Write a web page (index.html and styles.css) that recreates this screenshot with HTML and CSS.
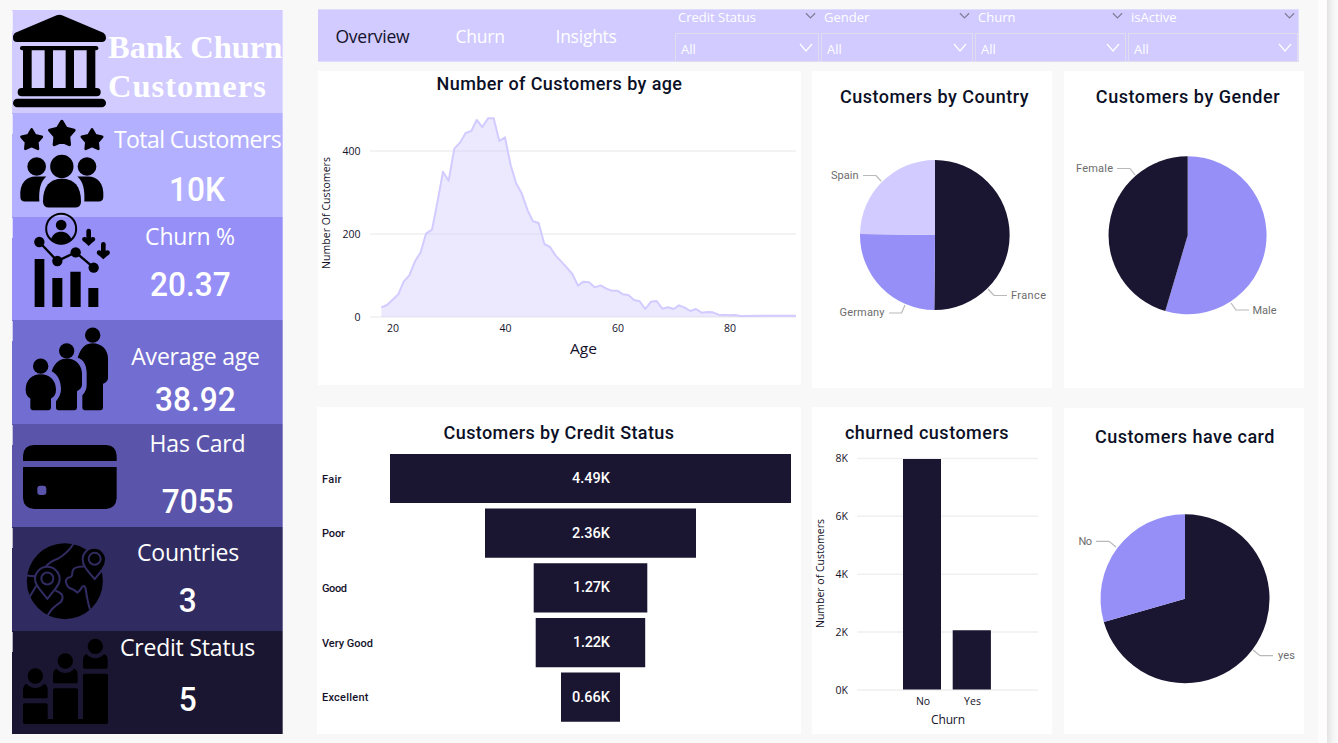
FILE: index.html
```html
<!DOCTYPE html>
<html lang="en">
<head>
<meta charset="utf-8">
<title>Bank Churn Customers</title>
<link rel="stylesheet" href="styles.css">
</head>
<body>
<div class="page">
<aside class="sidebar">
  <section class="tile tile-brand">
    <svg class="icon" viewBox="36 30 300 310.5"><path d="M170 46Q178 42 186 46L310 98Q318 103 318 114Q317 126 305 126H51Q39 126 39 114Q38 103 46 98Z"/><rect x="60" y="138" width="235" height="13" rx="6"/><path d="M69 145h26v125h-26zM134 145h25v125h-25zM197 145h25v125h-25zM260 145h26v125h-26z"/><rect x="53" y="264" width="249" height="25" rx="12"/><rect x="39" y="296" width="279" height="26" rx="13"/></svg>
    <h1 class="brand">Bank Churn<br><span class="brand-second">Customers</span></h1>
  </section>
  <section class="tile tile-total">
    <svg class="icon" viewBox="36 340.5 300 310.5">
      <defs><path id="star" stroke="#000" stroke-width="9" stroke-linejoin="round" d="M0-36L11.8-16.2L34.2-11.1L19 6.2L21.2 29.1L0 20L-21.2 29.1L-19 6.2L-34.2-11.1L-11.8-16.2Z"/></defs>
      <use href="#star" transform="translate(185.500 404) scale(1.07)"/><use href="#star" transform="translate(95 422) scale(.89)"/><use href="#star" transform="translate(276 422) scale(.89)"/>
      <circle cx="185.500" cy="501" r="35"/><circle cx="110" cy="501" r="28"/><circle cx="261" cy="501" r="28"/>
      <path d="M129 606C129 560 150 538 186 538S243 560 243 606Q243 624 225 624H147Q129 624 129 606Z"/>
      <path d="M61 592C58 550 80 531 106 531H139C122 545 116 570 118 606H75Q61 606 61 592Z"/><path d="M310 592C313 550 291 531 265 531H232C249 545 255 570 253 606H296Q310 606 310 592Z"/></svg>
    <div class="kpi"><span class="label">Total Customers</span><span class="value">10K</span></div>
  </section>
  <section class="tile tile-churn">
    <svg class="icon" viewBox="36 36 300 310.5"><circle cx="183.500" cy="71" r="45" fill="none" stroke="#000" stroke-width="6"/><circle cx="183.500" cy="60" r="16"/><path d="M152 106C156 87 170 80 183 80S211 87 215 106Q200 118 183 118T152 106Z"/><path d="M118 111L172 168L227 142L281 188" fill="none" stroke="#000" stroke-width="7"/><circle cx="118" cy="111" r="15.500"/><circle cx="172" cy="168" r="15.500"/><circle cx="227" cy="142" r="15.500"/><circle cx="281" cy="188" r="15.500"/><path d="M104 162h29v144h-29zM157 219h30v87h-30zM211 200h31v106h-31zM265 249h30v57h-30z"/>
      <g id="drop"><path d="M266 78V106" stroke="#000" stroke-width="14" stroke-linecap="round"/><path d="M246 103Q247 95 255 96L266 101L277 96Q285 95 286 103Q285 109 278 112L266 123L254 112Q247 109 246 103Z"/></g><use href="#drop" x="44" y="40"/></svg>
    <div class="kpi"><span class="label">Churn %</span><span class="value">20.37</span></div>
  </section>
  <section class="tile tile-age">
    <svg class="icon" viewBox="36 346.500 300 310.5"><circle cx="278" cy="392" r="23"/><circle cx="200" cy="439" r="23"/><circle cx="122" cy="485" r="23"/><path d="M77 556C77 525 97 509 122 509S168 525 168 556Q168 575 153 582V610Q153 617 146 617H98Q91 617 91 610V582Q77 575 77 556Z"/><path d="M155 500C165 470 185 462 203 462C230 463 246 485 246 508V540Q246 552 231 560V610Q231 617 224 617H176Q168 617 168 610V590Q183 575 183 553C182 525 172 510 155 500Z"/><path d="M233 460C243 425 260 416 278 416C305 416 324 435 324 462V520Q324 532 309 538V610Q309 617 302 617H254Q247 617 247 610V572Q260 560 260 540V508C260 480 250 465 233 460Z"/></svg>
    <div class="kpi"><span class="label">Average age</span><span class="value">38.92</span></div>
  </section>
  <section class="tile tile-card">
    <svg class="icon" viewBox="36 27 300 310.5"><path d="M69 138V122Q71 90 102 90H318Q348 90 350 122V138ZM69 156H350V250Q348 280 318 282H102Q71 280 69 250Z"/><rect x="112" y="212" width="27" height="28" rx="9" fill="#5a55ab"/></svg>
    <div class="kpi"><span class="label">Has Card</span><span class="value">7055</span></div>
  </section>
  <section class="tile tile-countries">
    <svg class="icon" viewBox="36 337.5 300 310.5"><circle cx="194.500" cy="500" r="114"/>
      <g stroke="#302c62" stroke-width="6" fill="none" stroke-linejoin="round"><path d="M79 482Q90 485 108 485M134 460Q150 440 175 432Q205 414 221 387M88 548L109 514M166 528Q199 540 182 563Q155 580 143 603M252 456Q216 455 217 476Q218 488 204 490Q190 498 206 519Q224 526 232 534Q240 530 245 519Q252 508 257 522Q262 560 270 585"/><path fill="#000" d="M142 553C120 524 105 512 105 494A37 37 0 0 1 179 494C179 512 164 524 142 553Z"/><circle cx="142" cy="492" r="18"/><path fill="#000" d="M284 494C262 468 248 454 248 435A35 35 0 0 1 318 435C318 454 306 468 284 494Z"/><circle cx="284" cy="433" r="18"/></g></svg>
    <div class="kpi"><span class="label">Countries</span><span class="value">3</span></div>
  </section>
  <section class="tile tile-credit">
    <svg class="icon" viewBox="36 648 300 310.5"><g id="person"><circle cx="106" cy="783" r="23"/><path d="M69 845V824Q70 810 79 806Q106 832 133 806Q143 811 143 824V845Q143 850 138 850H74Q69 850 69 845Z"/></g><use href="#person" x="90" y="-45"/><use href="#person" x="180" y="-89"/><path d="M74 865H138Q143 865 143 870V912H159V825Q159 820 164 820H229Q234 820 234 825V912H249V781Q249 776 254 776H319Q324 776 324 781V922Q324 927 319 927H74Q69 927 69 922V870Q69 865 74 865Z"/></svg>
    <div class="kpi"><span class="label">Credit Status</span><span class="value">5</span></div>
  </section>
</aside>

<main class="main">
  <header class="bar">
    <nav class="tabs"><a class="tab tab-on">Overview</a><a class="tab">Churn</a><a class="tab">Insights</a></nav>
    <div class="slicers">
      <div class="slicer"><div class="slicer-head"><span>Credit Status</span><svg class="chev-s" viewBox="0 0 12 8"><path d="M1 1L6 6L11 1"/></svg></div><div class="select"><span>All</span><svg class="chev" viewBox="0 0 14 9"><path d="M1 1L7 8L13 1"/></svg></div></div>
      <div class="slicer"><div class="slicer-head"><span>Gender</span><svg class="chev-s" viewBox="0 0 12 8"><path d="M1 1L6 6L11 1"/></svg></div><div class="select"><span>All</span><svg class="chev" viewBox="0 0 14 9"><path d="M1 1L7 8L13 1"/></svg></div></div>
      <div class="slicer"><div class="slicer-head"><span>Churn</span><svg class="chev-s" viewBox="0 0 12 8"><path d="M1 1L6 6L11 1"/></svg></div><div class="select"><span>All</span><svg class="chev" viewBox="0 0 14 9"><path d="M1 1L7 8L13 1"/></svg></div></div>
      <div class="slicer"><div class="slicer-head"><span>isActive</span><svg class="chev-s" viewBox="0 0 12 8"><path d="M1 1L6 6L11 1"/></svg></div><div class="select"><span>All</span><svg class="chev" viewBox="0 0 14 9"><path d="M1 1L7 8L13 1"/></svg></div></div>
    </div>
  </header>

  <div class="grid">
    <section class="card card-age">
      <h2 class="title">Number of Customers by age</h2>
      <svg class="chart" viewBox="318 97 483 288" width="483" height="288">
        <path class="gridline" d="M370 151H796M370 234H796M370 317H796"/>
        <g transform="translate(310 100) scale(.33333)">
          <path class="area" d="M214 651V622L231 615L248 599L265 583L281 545L298 526L315 484L332 457L348 401L366 389L382 308L399 215L416 242L433 146L450 128L467 99L484 93L500 60L517 81L534 55L551 55L568 123L585 112L602 195L618 249L635 280L653 331L669 364L686 369L703 432L720 441L737 467L754 485L770 502L787 522L804 557L820 545L837 547L854 562L872 556L889 566L905 572L922 572L939 583L955 585L972 600L989 604L1006 627L1023 605L1040 603L1057 626L1074 622L1091 627L1107 616L1124 623L1141 633L1158 627L1175 638L1192 636L1208 637L1226 644L1260 646L1276 645L1290 648L1458 647V651Z"/>
          <path class="line" d="M214 622L231 615L248 599L265 583L281 545L298 526L315 484L332 457L348 401L366 389L382 308L399 215L416 242L433 146L450 128L467 99L484 93L500 60L517 81L534 55L551 55L568 123L585 112L602 195L618 249L635 280L653 331L669 364L686 369L703 432L720 441L737 467L754 485L770 502L787 522L804 557L820 545L837 547L854 562L872 556L889 566L905 572L922 572L939 583L955 585L972 600L989 604L1006 627L1023 605L1040 603L1057 626L1074 622L1091 627L1107 616L1124 623L1141 633L1158 627L1175 638L1192 636L1208 637L1226 644L1260 646L1276 645L1290 648L1458 647"/>
        </g>
        <g class="axis"><g text-anchor="end"><text x="360.500" y="155">400</text><text x="360.500" y="238">200</text><text x="360.500" y="321">0</text></g>
        <g text-anchor="middle"><text x="393" y="332">20</text><text x="505.500" y="332">40</text><text x="618" y="332">60</text><text x="730" y="332">80</text></g>
        <text transform="translate(330 269) rotate(-90)" textLength="112">Number Of Customers</text></g>
        <text class="axis-big" x="570" y="354" textLength="27" lengthAdjust="spacingAndGlyphs">Age</text>
      </svg>
    </section>

    <section class="card card-country">
      <h2 class="title">Customers by Country</h2>
      <svg class="chart" viewBox="812 110 240 278" width="240" height="278">
        <path fill="#1a1631" d="M935 235V160A75 75 0 0 1 934.300 310Z"/><path fill="#958ff7" d="M935 235L934.300 310A75 75 0 0 1 860 234Z"/><path fill="#d1cbff" d="M935 235L860 234A75 75 0 0 1 935 160Z"/>
        <path class="leader" d="M863 175.500H876L881 181M988 289L994 295.500H1007M889 313H901.500L905 305"/>
        <g class="pie-label"><text x="831" y="179" textLength="27.500">Spain</text><text x="1011" y="299" textLength="35">France</text><text x="839.500" y="316" textLength="45">Germany</text></g>
      </svg>
    </section>

    <section class="card card-gender">
      <h2 class="title">Customers by Gender</h2>
      <svg class="chart" viewBox="1064 110 240 278" width="240" height="278">
        <path fill="#958ff7" d="M1187.700 235.200V156.200A79 79 0 1 1 1165.300 311Z"/><path fill="#1a1631" d="M1187.700 235.200L1165.300 311A79 79 0 0 1 1187.700 156.200Z"/>
        <path class="leader" d="M1117 168.500H1130L1135 175M1231 303L1236 310H1249"/>
        <g class="pie-label"><text x="1076" y="172" textLength="37">Female</text><text x="1252.500" y="314" textLength="24">Male</text></g>
      </svg>
    </section>

    <section class="card card-funnel">
      <h2 class="title">Customers by Credit Status</h2>
      <svg class="chart" viewBox="317 446 484 288" width="484" height="288">
        <path fill="#1a1631" d="M390 454h401v49h-401zM485 508.500h211v49.200h-211zM533.700 563.300h113.600v49.200h-113.600zM535.700 618h109.500v49.200h-109.500zM561 672.400h59v49.400h-59z"/>
        <g class="axis axis-din"><text x="322" y="483" textLength="19.500">Fair</text><text x="322" y="537" textLength="23">Poor</text><text x="322" y="592" textLength="25">Good</text><text x="322" y="647" textLength="51">Very Good</text><text x="322" y="701" textLength="46.500">Excellent</text></g>
        <g class="bar-label"><text x="572" y="483" textLength="38">4.49K</text><text x="572" y="538" textLength="38">2.36K</text><text x="573" y="592" textLength="37">1.27K</text><text x="573" y="647" textLength="37">1.22K</text><text x="572" y="702" textLength="38">0.66K</text></g>
      </svg>
    </section>

    <section class="card card-churned">
      <h2 class="title">churned customers</h2>
      <svg class="chart" viewBox="812 446 240 288" width="240" height="288">
        <path class="gridline" d="M857 458.500H1038M857 516.300H1038M857 574.200H1038M857 632H1038M857 690H1038"/>
        <path fill="#1a1631" d="M903 459h38v230.500h-38zM952.700 630.300h38.200v59.200h-38.200z"/>
        <g class="axis"><g text-anchor="end"><text x="848" y="462">8K</text><text x="848" y="520">6K</text><text x="848" y="578">4K</text><text x="848" y="636">2K</text><text x="848" y="694">0K</text></g>
        <g text-anchor="middle"><text x="923" y="705">No</text><text x="972.500" y="705">Yes</text></g>
        <text transform="translate(824 628) rotate(-90)" textLength="109">Number of Customers</text></g>
        <text class="axis-mid" x="931" y="724" textLength="34">Churn</text>
      </svg>
    </section>

    <section class="card card-have">
      <h2 class="title">Customers have card</h2>
      <svg class="chart" viewBox="1064 450 240 284" width="240" height="284">
        <path fill="#1a1631" d="M1185 598.700V514.200A84.500 84.500 0 1 1 1103.800 622Z"/><path fill="#958ff7" d="M1185 598.700L1103.800 622A84.500 84.500 0 0 1 1185 514.200Z"/>
        <path class="leader" d="M1096 541.300H1109L1116 547M1253 650L1260 655.700H1273"/>
        <g class="pie-label"><text x="1078.500" y="545" textLength="13.500">No</text><text x="1278" y="659" textLength="17">yes</text></g>
      </svg>
    </section>
  </div>
</main>
<div class="gutter"></div>
</div>
</body>
</html>
```

FILE: styles.css
```css
* { box-sizing: border-box; }
body { margin: 0; background: #f8f8f8; color: #0b1026; font-family: "Open Sans", "Noto Sans", sans-serif; }
.page { display: flex; width: 1338px; height: 743px; overflow: hidden; padding-left: 12px; }

.sidebar { width: 271px; margin-top: 9.5px; flex: none; color: #fff; }
.tile { position: relative; display: flex; height: 103.5px; border-right: 1px solid rgba(255, 255, 255, .3); }
.tile::before { content: ""; position: absolute; left: 0; top: 1px; width: 1px; height: 20px; background: rgba(255, 255, 255, .65); }
.icon { width: 100px; height: 103.5px; flex: none; overflow: visible; position: relative; z-index: 1; }
.tile-brand { background: #d1cbff; }
.tile-total { background: #b3b0ff; }
.tile-churn { background: #958ff7; }
.tile-age { background: #726dd1; }
.tile-card { background: #5a55ab; }
.tile-countries { background: #302c62; }
.tile-credit { background: #1a1631; }
.brand { margin: 18px 0 0 -4px; font: bold 32.5px/39px "Liberation Serif", serif; white-space: nowrap; }
.brand-second { letter-spacing: 1px; }
.kpi { display: flex; flex-direction: column; align-items: center; width: 171px; flex: none; white-space: nowrap; }
.label { font-size: 23px; line-height: 30px; letter-spacing: -.2px; }
.tile-total .label { letter-spacing: -.55px; }
.value { font: 500 34px/40px Roboto, sans-serif; transform: scaleX(.93); }
.tile-total .kpi { padding-top: 11px; gap: 15px; }
.tile-churn .kpi { padding: 4px 15px 0 0; gap: 13px; }
.tile-age .kpi { padding: 21px 4px 0 0; gap: 8px; }
.tile-card .kpi { padding-top: 4px; gap: 23px; }
.tile-countries .kpi { padding: 10px 19px 0 0; gap: 13px; }
.tile-credit .kpi { padding: 1px 20px 0 0; gap: 17px; }

.main { width: 1001px; margin-left: 34px; padding-top: 9px; flex: none; }
.bar { display: flex; width: 981px; height: 53px; margin-left: 1px; background: #d1cbff; border: 1px solid #e0dcfb; border-left: 0; color: #fff; }
.tabs { display: flex; width: 357px; padding-left: 17.5px; align-items: center; font-size: 17.5px; letter-spacing: -.25px; flex: none; }
.tab { width: 120px; flex: none; }
.tab + .tab { width: 100px; }
.tab-on { color: #14122b; }
.slicers { display: grid; grid-template-columns: 144px 152px 151px 170px; column-gap: 2px; }
.slicer-head { display: flex; justify-content: space-between; height: 22.5px; padding-left: 3px; padding-right: 3px; font-size: 13px; line-height: 15px; }
.chev-s { width: 11px; height: 8px; margin-top: 2px; }
.chev-s path { fill: none; stroke: #807c94; stroke-width: 1.3; }
.select { display: flex; justify-content: space-between; align-items: center; height: 29px; padding: 3px 5px 0; border: 1px solid #e0dcee; font-size: 13px; }
.chev { width: 14px; height: 9px; margin-top: -2px; }
.chev path { fill: none; stroke: #fff; stroke-width: 1.2; }

.grid { display: grid; grid-template-columns: 484px 240px 240px; grid-template-rows: 336px 327px; column-gap: 11px; margin-top: 9px; }
.card { display: flex; flex-direction: column; background: #fff; }
.card-age { margin-left: 1px; height: 314px; }
.card-country, .card-gender { height: 317px; }
.card-gender, .card-have { margin-left: 1px; width: 240px; }
.card-have { margin-top: 1px; }
.title { margin: 0; text-align: center; font: 500 18px/26px Roboto, sans-serif; letter-spacing: .4px; flex: none; white-space: nowrap; }
.card-country .title { padding: 13px 0 0 5px; letter-spacing: .5px; }
.card-gender .title { padding: 13px 0 0 8px; letter-spacing: .55px; }
.card-funnel .title, .card-churned .title { padding: 13px 0 0; }
.card-churned .title { padding-right: 10px; letter-spacing: .5px; }
.card-have .title { padding: 16px 0 0 2px; letter-spacing: .5px; }
.chart { display: block; flex: none; }
.gridline { fill: none; stroke: #f0f0f0; stroke-width: 1.6; }
.area { fill: #d1cbff; fill-opacity: .42; }
.line { fill: none; stroke: #d1cbff; stroke-width: 6; stroke-linejoin: round; }
.axis { font-size: 10.5px; fill: #14122b; }
.axis-din { font: 500 11px Roboto, sans-serif; }
.axis-big { font-size: 14.5px; fill: #14122b; }
.axis-mid { font-size: 12px; fill: #14122b; }
.pie-label { font: 400 11px Roboto, sans-serif; fill: #6c6c6c; }
.bar-label { font: 500 14.500px Roboto, sans-serif; fill: #fff; }
.leader { fill: none; stroke: #b9b9b9; stroke-width: 1.2; }

.gutter { flex: 1; background: linear-gradient(90deg, #fffcfd 9px, #e3e3e3 9px, #f4f4f4 15px, #fafafa 20px); }
```
